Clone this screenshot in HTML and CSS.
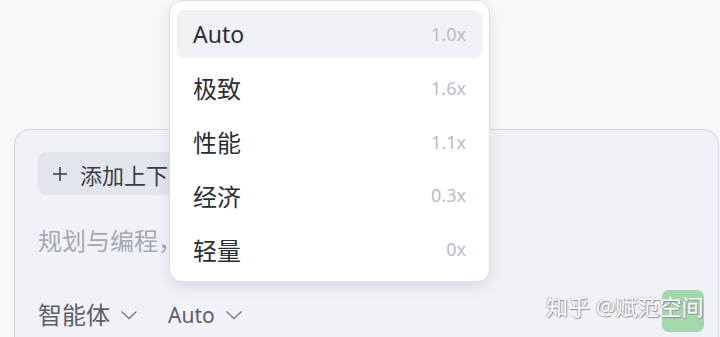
FILE: index.html
```html
<!DOCTYPE html>
<html lang="zh">
<head>
<meta charset="utf-8">
<link rel="stylesheet" href="styles.css">
</head>
<body>
<div class="page">
  <div class="card">
    <div class="chip">
      <svg class="plus" width="16" height="16" viewBox="0 0 16 16"><path d="M8 1v14M1 8h14" stroke="#3c3f46" stroke-width="1.6" fill="none"/></svg>
      <span>添加上下文</span>
    </div>
    <div class="placeholder">规划与编程，输入问题</div>
    <div class="toolbar">
      <div class="select"><span class="cjk">智能体</span>
        <svg width="18" height="10" viewBox="0 0 18 10"><path d="M1.5 1.5l7.5 7 7.5-7" stroke="#767a82" stroke-width="1.3" fill="none"/></svg>
      </div>
      <div class="select"><span class="latin">Auto</span>
        <svg width="18" height="10" viewBox="0 0 18 10"><path d="M1.5 1.5l7.5 7 7.5-7" stroke="#767a82" stroke-width="1.3" fill="none"/></svg>
      </div>
    </div>
  </div>

  <div class="menu">
    <div class="item active"><span class="label latin">Auto</span><span class="rate">1.0x</span></div>
    <div class="item"><span class="label">极致</span><span class="rate">1.6x</span></div>
    <div class="item"><span class="label">性能</span><span class="rate">1.1x</span></div>
    <div class="item"><span class="label">经济</span><span class="rate">0.3x</span></div>
    <div class="item"><span class="label">轻量</span><span class="rate">0x</span></div>
  </div>

  <div class="watermark"><span class="wm-box"></span><span class="wm-text">知乎 @赋范空间</span></div>
</div>
</body>
</html>
```

FILE: styles.css
```css
* { box-sizing: border-box; }
html, body {
  margin: 0;
  padding: 0;
  width: 720px;
  height: 337px;
  overflow: hidden;
  background: #f7f8fa;
  font-family: "Noto Sans", "Noto Sans CJK SC", sans-serif;
}
.page {
  position: relative;
  width: 720px;
  height: 337px;
  overflow: hidden;
  padding-top: 129px;
  padding-left: 14px;
}
.card {
  width: 705px;
  height: 208px;
  background: #f1f2f7;
  border: 1px solid #d3d6dd;
  border-bottom: 0;
  border-radius: 16px 16px 0 0;
  padding: 22px 23px 0;
  display: flex;
  flex-direction: column;
  align-items: flex-start;
}
.chip {
  height: 43px;
  width: 170px;
  background: #e3e5ec;
  border-radius: 8px;
  display: flex;
  align-items: center;
  gap: 12px;
  padding-left: 14px;
  font-size: 22px;
  color: #3a3d44;
  white-space: nowrap;
  overflow: hidden;
}
.placeholder {
  margin-top: 30px;
  font-size: 24px;
  line-height: 32px;
  color: #a6a9b1;
  white-space: nowrap;
}
.toolbar {
  margin-top: 42px;
  display: flex;
  gap: 30px;
}
.select {
  display: flex;
  align-items: center;
  gap: 10px;
  line-height: 32px;
  color: #5b5f67;
}
.select .cjk { font-size: 24px; }
.select .latin { font-size: 21px; }
.menu {
  position: absolute;
  left: 169px;
  top: 0;
  width: 321px;
  height: 282px;
  background: #ffffff;
  border: 1px solid #dcdee3;
  border-radius: 13px;
  box-shadow: 0 6px 14px rgba(40, 45, 70, 0.10);
  padding: 9px 7px 7px;
  display: flex;
  flex-direction: column;
  gap: 5.75px;
}
.item {
  height: 48px;
  border-radius: 8px;
  display: flex;
  align-items: center;
  justify-content: space-between;
  padding: 0 16px;
}
.item.active { background: #f0f1f4; }
.label {
  font-size: 24px;
  color: #2b2e34;
}
.label.latin { font-size: 23px; }
.rate {
  font-size: 18px;
  color: #b9bcc3;
}
.watermark {
  position: absolute;
  left: 546px;
  top: 290px;
  width: 160px;
  height: 42px;
}
.wm-box {
  position: absolute;
  left: 116px;
  top: 0;
  width: 42px;
  height: 42px;
  background: #a2d8ab;
  border-radius: 7px;
}
.wm-text {
  position: absolute;
  left: 0;
  top: 1px;
  font-size: 22px;
  line-height: 30px;
  color: #ffffff;
  white-space: nowrap;
  text-shadow: 1px 1px 1px #8a8d93, -1px 0 1px #b0b3b8;
}
```
